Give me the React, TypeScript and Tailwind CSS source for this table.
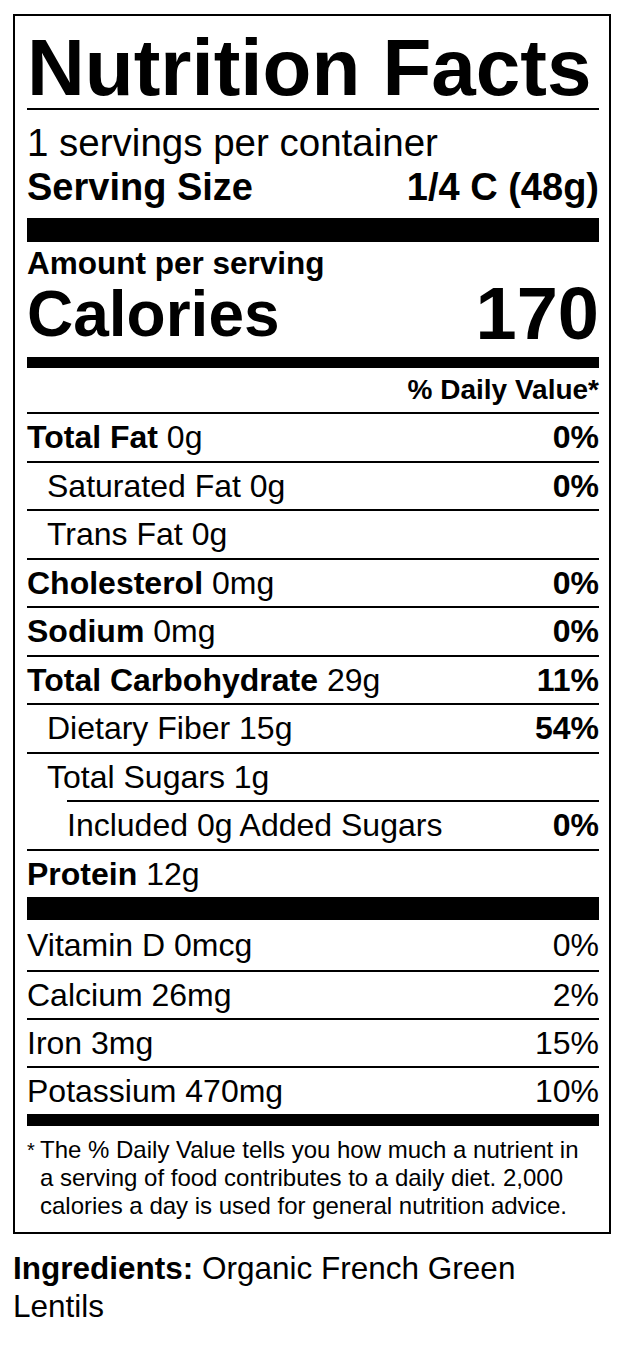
import React from 'react';

type Row = {
  label: string;
  amount?: string;
  dv?: string;
  bold?: boolean;
  indent?: 0 | 1 | 2;
};

const nutrients: Row[] = [
  { label: 'Total Fat', amount: '0g', dv: '0%', bold: true },
  { label: 'Saturated Fat', amount: '0g', dv: '0%', indent: 1 },
  { label: 'Trans Fat', amount: '0g', indent: 1 },
  { label: 'Cholesterol', amount: '0mg', dv: '0%', bold: true },
  { label: 'Sodium', amount: '0mg', dv: '0%', bold: true },
  { label: 'Total Carbohydrate', amount: '29g', dv: '11%', bold: true },
  { label: 'Dietary Fiber', amount: '15g', dv: '54%', indent: 1 },
  { label: 'Total Sugars', amount: '1g', indent: 1 },
  { label: 'Included 0g Added Sugars', dv: '0%', indent: 2 },
  { label: 'Protein', amount: '12g', bold: true },
];

const vitamins = [
  { label: 'Vitamin D 0mcg', dv: '0%' },
  { label: 'Calcium 26mg', dv: '2%' },
  { label: 'Iron 3mg', dv: '15%' },
  { label: 'Potassium 470mg', dv: '10%' },
];

function NutrientRow({ row }: { row: Row }) {
  // the added sugars line is inset along with its text
  if (row.indent === 2) {
    return (
      <div className="ml-[40px] flex h-[48.5px] items-center justify-between border-t-2 border-black">
        <span>{row.label}</span>
        <span className="font-bold">{row.dv}</span>
      </div>
    );
  }
  return (
    <div
      className={`flex h-[48.5px] items-center justify-between border-t-2 border-black ${
        row.indent === 1 ? 'pl-[20px]' : ''
      }`}
    >
      <span>
        {row.bold ? <span className="font-bold">{row.label}</span> : row.label}{' '}
        {row.amount}
      </span>
      {row.dv && <span className="font-bold">{row.dv}</span>}
    </div>
  );
}

export default function App() {
  return (
    <div className="min-h-screen w-[628px] bg-white pt-[14px] text-black font-['Liberation_Sans',Arial,Helvetica,sans-serif]">
      <div className="ml-[13px] w-[598px] border-2 border-black pl-[12px] pr-[10px]">
        <h1 className="pt-[12px] text-[80px] font-bold leading-[80px]">
          Nutrition Facts
        </h1>
        <div className="h-[2px] bg-black" />

        <div className="pt-[10px] pb-[8px] text-[38px] leading-[45px]">
          <div className="text-[38.5px]">1 servings per container</div>
          <div className="flex justify-between font-bold">
            <span>Serving Size</span>
            <span>1/4 C (48g)</span>
          </div>
        </div>
        <div className="h-[24px] bg-black" />

        <div className="pt-[4px] pb-[9px]">
          <div className="text-[31.5px] font-bold leading-[34px]">Amount per serving</div>
          <div className="flex h-[68px] items-center justify-between font-bold leading-none">
            <span className="text-[64px]">Calories</span>
            <span className="text-[74px]">170</span>
          </div>
        </div>
        <div className="h-[11px] bg-black" />

        <div className="flex h-[44px] items-center justify-end text-[28px] font-bold">
          % Daily Value*
        </div>

        <div className="text-[32px]">
          {nutrients.map((row) => (
            <NutrientRow key={row.label} row={row} />
          ))}
        </div>
        <div className="h-[23px] bg-black" />

        <div className="text-[32px]">
          {vitamins.map((v, i) => (
            <div
              key={v.label}
              className={`flex items-center justify-between ${
                i === 0 ? 'h-[49.5px]' : 'h-[48px] border-t-2 border-black'
              }`}
            >
              <span>{v.label}</span>
              <span>{v.dv}</span>
            </div>
          ))}
        </div>
        <div className="h-[12px] bg-black" />

        <div className="flex pt-[10px] pb-[12px] text-[24px] leading-[28px]">
          <span className="w-[13px] shrink-0 text-[20px]">*</span>
          <p className="pr-[12px]">
            The % Daily Value tells you how much a nutrient in a serving of food contributes
            to a daily diet. 2,000 calories a day is used for general nutrition advice.
          </p>
        </div>
      </div>

      <div className="mt-[15px] w-[600px] pl-[13px] text-[31.5px] leading-[38px]">
        <b>Ingredients:</b> Organic French Green Lentils
      </div>
    </div>
  );
}
